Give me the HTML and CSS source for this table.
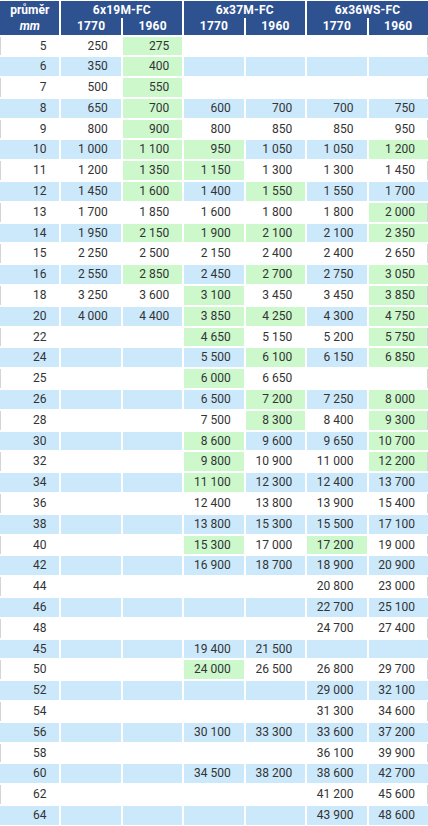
FILE: index.html
```html
<!DOCTYPE html>
<html lang="cs">
<head>
<meta charset="utf-8">
<title>Lana – únosnost</title>
<link rel="stylesheet" href="styles.css">
</head>
<body>
<div class="sheet">
  <div class="head">
    <div class="hcell dia"><span>průměr</span><span class="unit">mm</span></div>
    <div class="hcell grp g1">6x19M-FC</div>
    <div class="hcell grp g2">6x37M-FC</div>
    <div class="hcell grp g3">6x36WS-FC</div>
    <div class="hcell sub">1770</div>
    <div class="hcell sub">1960</div>
    <div class="hcell sub">1770</div>
    <div class="hcell sub">1960</div>
    <div class="hcell sub">1770</div>
    <div class="hcell sub">1960</div>
  </div>
  <div class="body">
    <div class="row"><div class="c">5</div><div class="c">250</div><div class="c g">275</div><div class="c"></div><div class="c"></div><div class="c"></div><div class="c"></div></div>
    <div class="row alt"><div class="c">6</div><div class="c">350</div><div class="c g">400</div><div class="c"></div><div class="c"></div><div class="c"></div><div class="c"></div></div>
    <div class="row"><div class="c">7</div><div class="c">500</div><div class="c g">550</div><div class="c"></div><div class="c"></div><div class="c"></div><div class="c"></div></div>
    <div class="row alt"><div class="c">8</div><div class="c">650</div><div class="c g">700</div><div class="c">600</div><div class="c">700</div><div class="c">700</div><div class="c">750</div></div>
    <div class="row"><div class="c">9</div><div class="c">800</div><div class="c g">900</div><div class="c">800</div><div class="c">850</div><div class="c">850</div><div class="c">950</div></div>
    <div class="row alt"><div class="c">10</div><div class="c">1 000</div><div class="c g">1 100</div><div class="c g">950</div><div class="c">1 050</div><div class="c">1 050</div><div class="c g">1 200</div></div>
    <div class="row"><div class="c">11</div><div class="c">1 200</div><div class="c g">1 350</div><div class="c g">1 150</div><div class="c">1 300</div><div class="c">1 300</div><div class="c">1 450</div></div>
    <div class="row alt"><div class="c">12</div><div class="c">1 450</div><div class="c g">1 600</div><div class="c">1 400</div><div class="c g">1 550</div><div class="c">1 550</div><div class="c">1 700</div></div>
    <div class="row"><div class="c">13</div><div class="c">1 700</div><div class="c">1 850</div><div class="c">1 600</div><div class="c">1 800</div><div class="c">1 800</div><div class="c g">2 000</div></div>
    <div class="row alt"><div class="c">14</div><div class="c">1 950</div><div class="c g">2 150</div><div class="c g">1 900</div><div class="c g">2 100</div><div class="c">2 100</div><div class="c g">2 350</div></div>
    <div class="row"><div class="c">15</div><div class="c">2 250</div><div class="c">2 500</div><div class="c">2 150</div><div class="c">2 400</div><div class="c">2 400</div><div class="c">2 650</div></div>
    <div class="row alt"><div class="c">16</div><div class="c">2 550</div><div class="c g">2 850</div><div class="c">2 450</div><div class="c g">2 700</div><div class="c">2 750</div><div class="c g">3 050</div></div>
    <div class="row"><div class="c">18</div><div class="c">3 250</div><div class="c">3 600</div><div class="c g">3 100</div><div class="c">3 450</div><div class="c">3 450</div><div class="c g">3 850</div></div>
    <div class="row alt"><div class="c">20</div><div class="c">4 000</div><div class="c">4 400</div><div class="c g">3 850</div><div class="c g">4 250</div><div class="c">4 300</div><div class="c g">4 750</div></div>
    <div class="row"><div class="c">22</div><div class="c"></div><div class="c"></div><div class="c g">4 650</div><div class="c">5 150</div><div class="c">5 200</div><div class="c g">5 750</div></div>
    <div class="row alt"><div class="c">24</div><div class="c"></div><div class="c"></div><div class="c">5 500</div><div class="c g">6 100</div><div class="c">6 150</div><div class="c g">6 850</div></div>
    <div class="row"><div class="c">25</div><div class="c"></div><div class="c"></div><div class="c g">6 000</div><div class="c">6 650</div><div class="c"></div><div class="c"></div></div>
    <div class="row alt"><div class="c">26</div><div class="c"></div><div class="c"></div><div class="c">6 500</div><div class="c g">7 200</div><div class="c">7 250</div><div class="c g">8 000</div></div>
    <div class="row"><div class="c">28</div><div class="c"></div><div class="c"></div><div class="c">7 500</div><div class="c g">8 300</div><div class="c">8 400</div><div class="c g">9 300</div></div>
    <div class="row alt"><div class="c">30</div><div class="c"></div><div class="c"></div><div class="c g">8 600</div><div class="c">9 600</div><div class="c">9 650</div><div class="c g">10 700</div></div>
    <div class="row"><div class="c">32</div><div class="c"></div><div class="c"></div><div class="c g">9 800</div><div class="c">10 900</div><div class="c">11 000</div><div class="c g">12 200</div></div>
    <div class="row alt"><div class="c">34</div><div class="c"></div><div class="c"></div><div class="c g">11 100</div><div class="c">12 300</div><div class="c">12 400</div><div class="c">13 700</div></div>
    <div class="row"><div class="c">36</div><div class="c"></div><div class="c"></div><div class="c">12 400</div><div class="c">13 800</div><div class="c">13 900</div><div class="c">15 400</div></div>
    <div class="row alt"><div class="c">38</div><div class="c"></div><div class="c"></div><div class="c">13 800</div><div class="c">15 300</div><div class="c">15 500</div><div class="c">17 100</div></div>
    <div class="row"><div class="c">40</div><div class="c"></div><div class="c"></div><div class="c g">15 300</div><div class="c">17 000</div><div class="c g">17 200</div><div class="c">19 000</div></div>
    <div class="row alt"><div class="c">42</div><div class="c"></div><div class="c"></div><div class="c">16 900</div><div class="c">18 700</div><div class="c">18 900</div><div class="c">20 900</div></div>
    <div class="row"><div class="c">44</div><div class="c"></div><div class="c"></div><div class="c"></div><div class="c"></div><div class="c">20 800</div><div class="c">23 000</div></div>
    <div class="row alt"><div class="c">46</div><div class="c"></div><div class="c"></div><div class="c"></div><div class="c"></div><div class="c">22 700</div><div class="c">25 100</div></div>
    <div class="row"><div class="c">48</div><div class="c"></div><div class="c"></div><div class="c"></div><div class="c"></div><div class="c">24 700</div><div class="c">27 400</div></div>
    <div class="row alt"><div class="c">45</div><div class="c"></div><div class="c"></div><div class="c">19 400</div><div class="c">21 500</div><div class="c"></div><div class="c"></div></div>
    <div class="row"><div class="c">50</div><div class="c"></div><div class="c"></div><div class="c g">24 000</div><div class="c">26 500</div><div class="c">26 800</div><div class="c">29 700</div></div>
    <div class="row alt"><div class="c">52</div><div class="c"></div><div class="c"></div><div class="c"></div><div class="c"></div><div class="c">29 000</div><div class="c">32 100</div></div>
    <div class="row"><div class="c">54</div><div class="c"></div><div class="c"></div><div class="c"></div><div class="c"></div><div class="c">31 300</div><div class="c">34 600</div></div>
    <div class="row alt"><div class="c">56</div><div class="c"></div><div class="c"></div><div class="c">30 100</div><div class="c">33 300</div><div class="c">33 600</div><div class="c">37 200</div></div>
    <div class="row"><div class="c">58</div><div class="c"></div><div class="c"></div><div class="c"></div><div class="c"></div><div class="c">36 100</div><div class="c">39 900</div></div>
    <div class="row alt"><div class="c">60</div><div class="c"></div><div class="c"></div><div class="c">34 500</div><div class="c">38 200</div><div class="c">38 600</div><div class="c">42 700</div></div>
    <div class="row"><div class="c">62</div><div class="c"></div><div class="c"></div><div class="c"></div><div class="c"></div><div class="c">41 200</div><div class="c">45 600</div></div>
    <div class="row alt"><div class="c">64</div><div class="c"></div><div class="c"></div><div class="c"></div><div class="c"></div><div class="c">43 900</div><div class="c">48 600</div></div>
  </div>
</div>
</body>
</html>
```
FILE: styles.css
```css
html, body {
  margin: 0;
  padding: 0;
  background: #ffffff;
}

body {
  font-family: Roboto, "Liberation Sans", Arial, sans-serif;
  font-size: 12px;
  color: #333333;
}

.sheet {
  width: 428px;
  padding-top: 1px;
  display: flex;
  flex-direction: column;
  gap: 2px;
}

.head {
  display: grid;
  grid-template-columns: repeat(7, 1fr);
  grid-template-rows: 17px 16.5px;
  column-gap: 2px;
  row-gap: 0;
}

.hcell {
  background: #2e5190;
  color: #ffffff;
  font-weight: 700;
  font-size: 12px;
  text-align: center;
  display: flex;
  align-items: center;
  justify-content: center;
  letter-spacing: 0.2px;
}

.dia {
  grid-row: 1 / span 2;
  grid-column: 1;
  flex-direction: column;
  gap: 2px;
  letter-spacing: 0;
}

.unit {
  font-style: italic;
}

.grp {
  grid-row: 1;
  padding-top: 1px;
}

.g1 { grid-column: 2 / span 2; }
.g2 { grid-column: 4 / span 2; }
.g3 { grid-column: 6 / span 2; }

.sub {
  grid-row: 2;
  padding-bottom: 1px;
}

.body {
  display: flex;
  flex-direction: column;
  gap: 2px;
}

.row {
  display: grid;
  grid-template-columns: repeat(7, 1fr);
  column-gap: 2px;
  height: 18.8px;
}

.c {
  background: #ffffff;
  text-align: right;
  padding-right: 13px;
  line-height: 18.8px;
  white-space: nowrap;
}

.row:not(.alt) .c:first-child {
  box-shadow: inset 1px 0 0 #d4d4d4;
}

.row:not(.alt) .c:last-child {
  box-shadow: inset -1px 0 0 #d4d4d4;
}

.row.alt .c {
  background: #cce9fc;
}

.row .c.g {
  background: #ccf8cc;
  box-shadow: none;
}
```
